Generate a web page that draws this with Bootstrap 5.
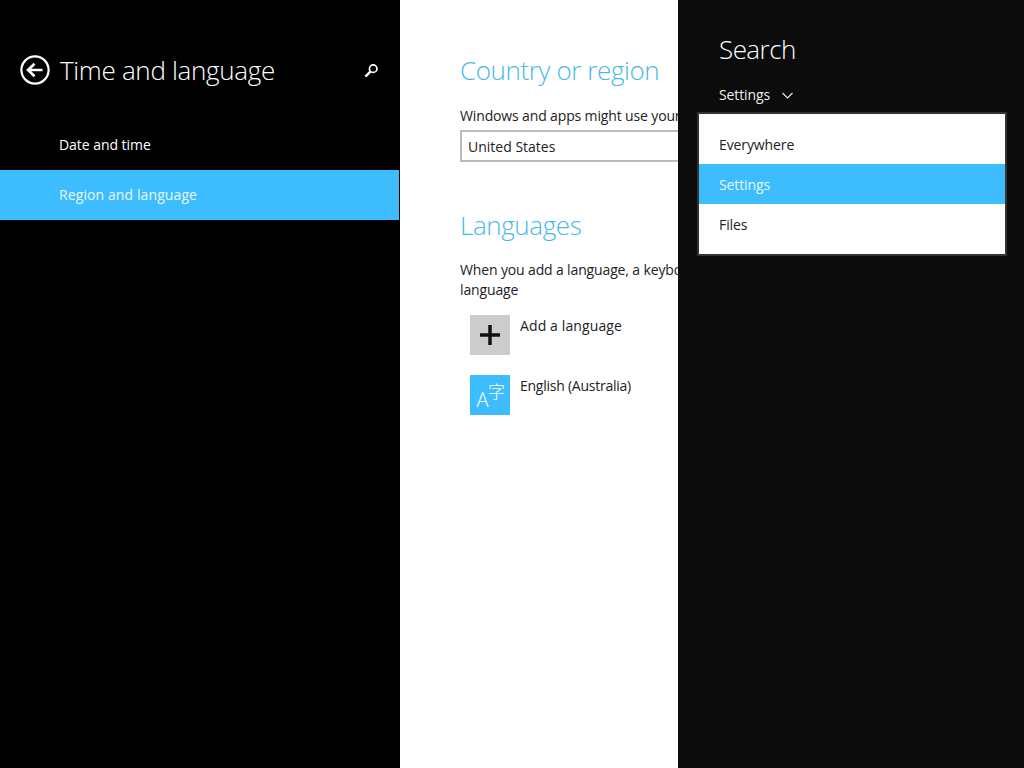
<!DOCTYPE html>
<html lang="en">
<head>
<meta charset="utf-8">
<title>Time and language</title>
<link href="https://cdn.jsdelivr.net/npm/bootstrap@5.3.0/dist/css/bootstrap.min.css" rel="stylesheet">
<style>
html,body{height:100%;}
body{background:#000;font-family:"Open Sans","Noto Sans",sans-serif;font-size:14px;line-height:20px;overflow:hidden;}
.shell{width:1024px;height:768px;}
.nav-pane{width:400px;background:#000;color:#fff;padding-right:1px;}
.pane-head{height:120px;padding:53px 20px 0 20px;}
.back-icon{margin-top:2px;}
.find-icon{margin-top:10px;}
.pane-title{font-size:26px;line-height:34px;font-weight:300;margin:0 0 0 10px;letter-spacing:-.32px;}
.nav-entry{height:50px;padding:0 0 1px 59px;color:#fff;text-decoration:none;letter-spacing:-.05px;}
.nav-entry.on{background:#3dbdfd;color:#e9f8ff;letter-spacing:.1px;}
.main-pane{width:278px;background:#fff;padding:53px 0 0 60px;overflow:hidden;color:#222;}
.sect-title{font-size:26px;line-height:34px;font-weight:300;color:#49b8e8;margin:0;white-space:nowrap;letter-spacing:-.4px;}
.sect-gap{margin-top:46px;}
.sect-text{margin:0;white-space:nowrap;letter-spacing:-.14px;}
.text-a{margin-top:19px;}
.text-b{margin-top:18px;}
.region-box{width:340px;height:32px;border:2px solid #bbb;padding:5px 6px 3px;margin-top:4px;color:#222;flex:none;}
.lang-rows{margin-top:15px;}
.lang-row{padding-left:10px;height:60px;gap:10px;white-space:nowrap;}
.lang-name{padding-top:1px;}
.name-wide{letter-spacing:.12px;}
.name-tight{letter-spacing:-.25px;}
.lang-tile{width:40px;height:40px;flex:none;}
.tile-add{background:#ccc;}
.tile-lang{background:#3dbdfd;}
.search-pane{width:346px;background:#0c0c0c;color:#fff;padding:32px 18px 0 19px;}
.search-title{font-size:26px;line-height:34px;font-weight:300;margin:0 0 0 22px;letter-spacing:-.55px;}
.scope-toggle{margin:19px 0 0 22px;height:20px;gap:12px;color:#eee;letter-spacing:-.1px;}
.scope-menu{width:310px;background:#fff;border:2px solid #333;padding:10px 0;margin-top:7px;}
.scope-item{height:40px;padding:1px 0 0 20px;color:#222;letter-spacing:-.1px;}
.scope-item.on{background:#3dbdfd;color:#e9f8ff;}
</style>
</head>
<body>
<div class="shell d-flex">
  <div class="nav-pane flex-shrink-0">
    <div class="pane-head d-flex align-items-start">
      <svg width="30" height="30" viewBox="0 0 30 30" class="back-icon flex-shrink-0" aria-hidden="true"><circle cx="15" cy="15" r="13.6" fill="none" stroke="#fff" stroke-width="2.2"/><path d="M22.5 15H8.5M14.5 8.800 8 15l6.500 6.200" fill="none" stroke="#fff" stroke-width="2.600"/></svg>
      <h1 class="pane-title flex-grow-1">Time and language</h1>
      <svg width="15" height="15" viewBox="0 0 16 16" class="find-icon flex-shrink-0" aria-hidden="true"><circle cx="9.800" cy="6" r="4" fill="none" stroke="#fff" stroke-width="1.800"/><path d="M7 9 1.500 14.500" stroke="#fff" stroke-width="2.600"/></svg>
    </div>
    <a class="nav-entry d-flex align-items-center" href="#">Date and time</a>
    <a class="nav-entry on d-flex align-items-center" href="#">Region and language</a>
  </div>
  <div class="main-pane flex-shrink-0 d-flex flex-column">
    <h2 class="sect-title">Country or region</h2>
    <p class="sect-text text-a">Windows and apps might use your country or region to give you local content</p>
    <div class="region-box">United States</div>
    <h2 class="sect-title sect-gap">Languages</h2>
    <p class="sect-text text-b">When you add a language, a keyboard is added so you can type in the<br>language</p>
    <div class="lang-rows">
      <div class="lang-row d-flex"><div class="lang-tile tile-add d-flex align-items-center justify-content-center"><svg width="20" height="20" viewBox="0 0 20 20" aria-hidden="true"><path d="M10 0v20M0 10h20" stroke="#111" stroke-width="3.500"/></svg></div><span class="lang-name name-wide">Add a language</span></div>
      <div class="lang-row d-flex"><div class="lang-tile tile-lang"><svg width="40" height="40" viewBox="0 0 40 40" aria-hidden="true"><text x="6.500" y="32" font-size="20" font-weight="300" fill="#fff" font-family="Open Sans, sans-serif">A</text><text x="18" y="23" font-size="17" font-weight="300" fill="#fff" font-family="Noto Sans CJK SC, sans-serif">字</text></svg></div><span class="lang-name name-tight">English (Australia)</span></div>
    </div>
  </div>
  <div class="search-pane flex-shrink-0">
    <h2 class="search-title">Search</h2>
    <div class="scope-toggle d-flex align-items-center"><span>Settings</span><svg width="11" height="7" viewBox="0 0 11 7" aria-hidden="true"><path d="M.5 1 5.500 6l5-5" fill="none" stroke="#eee" stroke-width="1.100"/></svg></div>
    <div class="scope-menu">
      <div class="scope-item d-flex align-items-center">Everywhere</div>
      <div class="scope-item on d-flex align-items-center">Settings</div>
      <div class="scope-item d-flex align-items-center">Files</div>
    </div>
  </div>
</div>
<script src="https://cdn.jsdelivr.net/npm/bootstrap@5.3.0/dist/js/bootstrap.bundle.min.js"></script>
</body>
</html>
